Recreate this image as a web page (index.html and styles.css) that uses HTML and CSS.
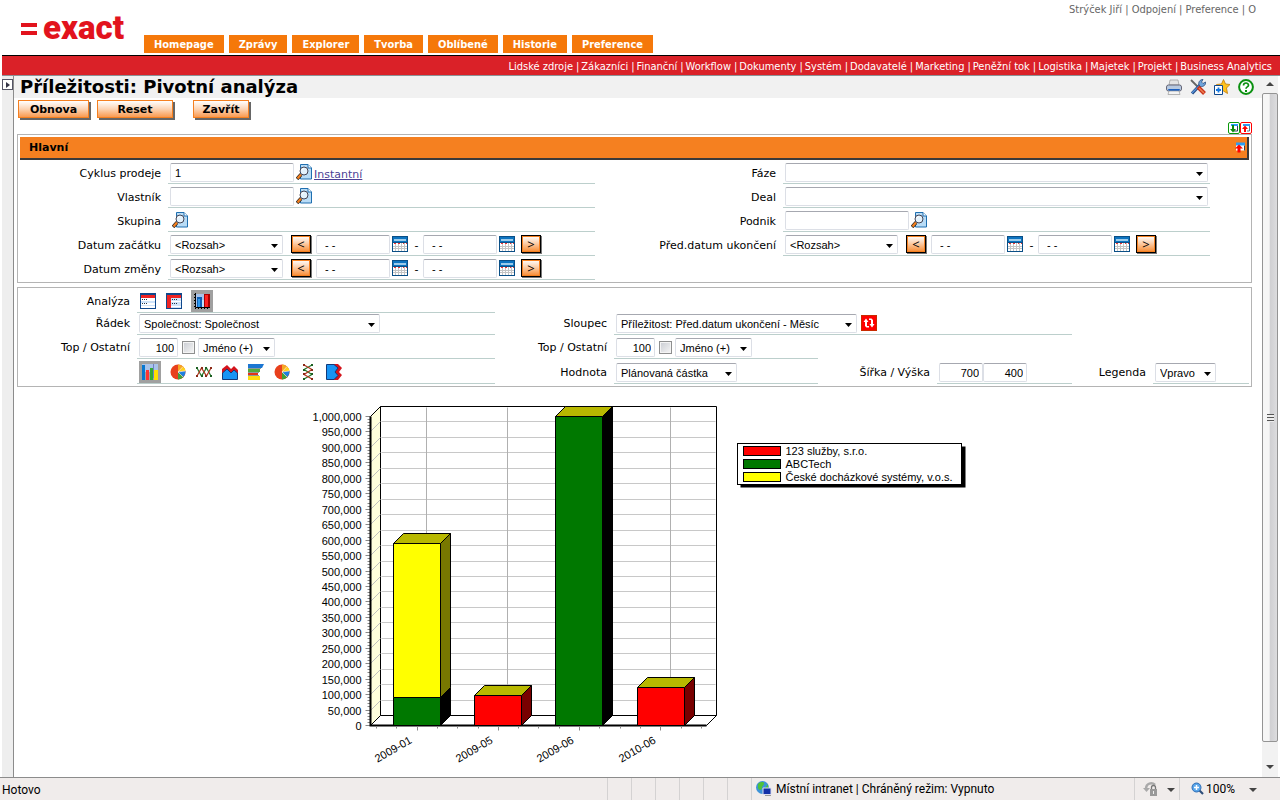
FILE: index.html
```
<!DOCTYPE html>
<html lang="cs">
<head>
  <meta charset="UTF-8">
  <meta name="viewport" content="width=device-width, initial-scale=1.0">
  <title>Příležitosti: Pivotní analýza</title>
  <link rel="stylesheet" href="styles.css">
</head>
<body>

<svg class="sprite" aria-hidden="true">
  <symbol id="i-lookup" viewBox="0 0 16 16">
    <path d="M4.500 .5h7.500l3.500 3.500v11h-11z" fill="#b9dcf6" stroke="#1f6fb0"/>
    <path d="M12 .5V4h3.500" fill="#fff" stroke="#1f6fb0"/>
    <path d="M5 10.500 1 15" stroke="#222" stroke-width="3.500"/>
    <path d="M5 10.500 1.500 14.500" stroke="#f58020" stroke-width="2.200"/>
    <circle cx="8" cy="7" r="4" fill="#e4f2fc" stroke="#445"/>
    <path d="M5.800 6.500a2.300 2.300 0 0 1 2.200-2" fill="none" stroke="#fff"/>
  </symbol>
  <symbol id="i-calendar" viewBox="0 0 16 16">
    <path fill="#0a4f86" d="M0 0h16v16H0z"/>
    <path fill="#0d74c0" d="M1 1h14v5H1z"/>
    <path fill="#9ccbea" d="M2 3h12v2H2z"/>
    <path fill="#fff" d="M1 7h14v8H1z"/>
    <path d="M3.500 7v8M6.500 7v8M9.500 7v8M12.500 7v8M1 10.500h14M1 12.500h14" stroke="#c4c4c4"/>
    <path d="M2 7.500h2m2 0h2m3 0h1m2 0h1" stroke="#e33"/>
  </symbol>
  <symbol id="i-list" viewBox="0 0 16 16">
    <path fill="#10488c" d="M0 0h16v16H0z"/>
    <path fill="#fff" d="M1 5h14v10H1z"/>
    <path fill="#e22" d="M1 2h14v3H1z"/>
    <path fill="#cfe4fa" d="M1 8h14v2H1zm0 4h14v1H1z"/>
    <path d="M2 6.500h1m1 0h1m1 0h1M2 10.500h1m1 0h1m1 0h1" stroke="#234"/>
  </symbol>
  <symbol id="i-pivot" viewBox="0 0 16 16">
    <path fill="#10488c" d="M0 0h16v16H0z"/>
    <path fill="#cfe4fa" d="M5 5h10v10H5z"/>
    <path fill="#e22" d="M1 2h14v3H5v10H1z"/>
    <path d="M6 6.500h1m1 0h1m1 0h1M6 10.500h1m1 0h1m1 0h1" stroke="#234"/>
    <path d="M5 8.500h10M5 13.500h10" stroke="#fff"/>
  </symbol>
  <symbol id="i-chart" viewBox="0 0 16 16">
    <path fill="#a9c3ea" d="M2 1h14v13H2z"/>
    <path d="M1.500 0v14.500H16" fill="none" stroke="#000"/>
    <path d="M.5 1v14M1 15.500h15" fill="none" stroke="#000" stroke-dasharray="1 2"/>
    <path fill="#0f5fb5" d="M3 4h5v10H3z"/><path fill="#2a98f0" d="M4 6h2v8H4z"/>
    <path fill="#bfe0fa" d="M8 7h2v7H8z"/>
    <path fill="#a00" d="M10 1h6v13h-6z"/><path fill="#f22" d="M11 2h3v12h-3z"/>
  </symbol>
  <symbol id="i-bars" viewBox="0 0 16 16">
    <path fill="#a9c3ea" d="M0 0h16v8H0z"/>
    <path fill="#0877d0" d="M0 1h3v15H0z"/>
    <path fill="#f33" d="M4 6h3v10H4z"/>
    <path fill="#3a3" d="M8 4h3v12H8z"/>
    <path fill="#ffe000" d="M12 6h4v10h-4z"/>
    <path fill="#7080c8" d="M11 0h1v14h-1z"/>
  </symbol>
  <symbol id="i-pie" viewBox="0 0 16 16">
    <circle cx="8" cy="8" r="7.500" fill="#e8401c"/>
    <path d="M8 8V.5a7.500 7.500 0 0 1 5 2z" fill="#f5a623"/>
    <path d="M8 8l5-5.500A7.500 7.500 0 0 1 15.500 7z" fill="#ffd21c"/>
    <path d="M8 8l7.500-1a7.500 7.500 0 0 1-2 6z" fill="#1d7fe0"/>
    <path d="M8 8l5.500 5A7.500 7.500 0 0 1 8 15.500z" fill="#3da03a"/>
    <path d="M8 8l5-5.500M8 8l7-1M8 8l5 5" stroke="#fff" stroke-width=".6"/>
  </symbol>
  <symbol id="i-lines" viewBox="0 0 16 16">
    <path d="M1 4l4.500 8 5-8 4.500 8" fill="none" stroke="#237a2b" stroke-width="1.200"/>
    <path d="M1 12l4.500-8 5 8L15 4" fill="none" stroke="#b5341f" stroke-width="1.200"/>
    <path d="M0 3h2v2H0zm5 8h2v2H5zm4-8h2v2H9zm5 8h2v2h-2z" fill="#1c5f22"/>
    <path d="M0 11h2v2H0zm5-8h2v2H5zm4 8h2v2H9zm5-8h2v2h-2z" fill="#8b2a17"/>
  </symbol>
  <symbol id="i-area" viewBox="0 0 16 16">
    <path d="M0 9V5l5-4 4 4 3-3 4 4v4z" fill="#d4141c"/>
    <path d="M.5 15.500V9L5 5l4 4 3-3 3.500 3v6.500z" fill="#1794f5" stroke="#123a7a"/>
  </symbol>
  <symbol id="i-hbars" viewBox="0 0 16 16">
    <path fill="#1b76d2" d="M0 0h16l-2 4H0z"/>
    <path fill="#54a83c" d="M0 5h12v3H0z"/>
    <path fill="#e33318" d="M0 9h10v2H0z"/>
    <path fill="#ffdc10" d="M0 12h12v4H0z"/>
    <path d="M0 4.500h13M0 8.500h11M0 11.500h11" stroke="#8a9a9a"/>
  </symbol>
  <symbol id="i-column-area" viewBox="0 0 16 16">
    <path d="M8 0h4l4 4-3 4 3 3-4 5H8z" fill="#d4141c"/>
    <path d="M.5.500H8l4 3.500-3 4 3 3.500-4 4H.5z" fill="#1794f5" stroke="#123a7a"/>
  </symbol>
  <symbol id="i-swap" viewBox="0 0 16 16">
    <path fill="#c92a00" d="M0 0h16v16H0z"/><path fill="#f00" d="M1 1h14v14H1z"/>
    <path d="M2.500 7 5 3.500 7.500 7H6v4h2v1.500H5.500L4 11V7zM13.500 9 11 12.500 8.500 9H10V5H8V3.500h2.500L12 5v4z" fill="#fff"/>
  </symbol>
  <symbol id="i-fold" viewBox="0 0 10 10">
    <path fill="#fff" d="M1 1h9v7H1z"/><path d="M1 0h9v3H1z" fill="#2b9df5"/><path d="M9.500 3v5" stroke="#345"/>
    <path d="M4 2l4 4H5.500v4h-3V6H0z" fill="#f00"/>
  </symbol>
  <symbol id="i-fold-all" viewBox="0 0 12 12">
    <rect x=".5" y=".5" width="11" height="11" rx="1.500" fill="#fff" stroke="#f00"/>
    <path d="M3 2h7v2H3z" fill="#2b9df5"/><path d="M9.500 4v5H7" stroke="#578" fill="none"/>
    <path d="M5 3.500 8 7H6v3H4V7H2z" fill="#f00"/>
  </symbol>
  <symbol id="i-unfold-all" viewBox="0 0 12 12">
    <rect x=".5" y=".5" width="11" height="11" rx="1.500" fill="#fff" stroke="#0a9a0a"/>
    <path d="M3 2h7v2H3z" fill="#2b9df5"/><path d="M9.500 4v5H6" stroke="#345" fill="none"/>
    <path d="M4 3h2v4h2l-3 3.500L2 7h2z" fill="#0a8a0a"/>
  </symbol>
  <symbol id="i-print" viewBox="0 0 16 16">
    <path d="M4 1h8l1 5H3z" fill="#e4e4e4" stroke="#999" stroke-width=".7"/>
    <rect x=".5" y="6" width="15" height="6" rx="2" fill="#b7c9e0" stroke="#667"/>
    <path d="M2 10h12l-1 2H3z" fill="#1a5fc0"/>
    <path d="M3 12h10l1 3.500H2z" fill="#f4f4f4" stroke="#999" stroke-width=".7"/>
  </symbol>
  <symbol id="i-tools" viewBox="0 0 16 16">
    <path d="M1 1l7 7" stroke="#666" stroke-width="1.800"/>
    <path d="M2 14.500 10 6" stroke="#234a85" stroke-width="3.200"/><path d="M2 14l8-8" stroke="#5a95dd" stroke-width="1.200"/>
    <path d="M9 6c-1-3 1-5.500 4-5.500L11.500 3 13 4.500 15.500 3c.5 3-2 5-5 4.500z" fill="#6ea4dc" stroke="#2b4d7c" stroke-width=".8"/>
    <path d="M8 8l6.500 6.500" stroke="#c8321c" stroke-width="4"/><path d="M9 9l5 5" stroke="#f08050" stroke-width="1.500"/>
  </symbol>
  <symbol id="i-star" viewBox="0 0 16 16">
    <path d="M9.500 .5l2 4.500 4.500.5-3.500 3.500 1 5.500-4-2.500-4 2.500V9L2.500 5.500l5-.5z" fill="#ffc21c" stroke="#c07808" stroke-width=".8"/>
    <path d="M.5 6.500h8v9h-8z" fill="#fff" stroke="#10488c"/>
    <path d="M4.500 8.500v5M2 11h5" stroke="#1478e0" stroke-width="1.800"/>
  </symbol>
  <symbol id="i-help" viewBox="0 0 16 16">
    <circle cx="8" cy="8" r="6.900" fill="#fff" stroke="#0a9010" stroke-width="2"/>
    <path d="M5.500 6.500C5.500 3.200 10.500 3.300 10.500 6.200 10.500 8 8 7.800 8 9.800" fill="none" stroke="#0a9010" stroke-width="1.700"/>
    <path d="M7 11h2v2H7z" fill="#0a9010"/>
  </symbol>
  <symbol id="i-globe" viewBox="0 0 16 16">
    <circle cx="6.500" cy="6.500" r="6.500" fill="#3d93d8"/>
    <path d="M2 3c3-3 7-2 6 0S6 5 6 7s-3 3-4 0zM9 7l3-4v4z" fill="#4fc23a"/>
    <path d="M7 7h8v6.500H7z" fill="#1230a8" stroke="#dde"/><path d="M9 14h6v1H9z" fill="#999"/>
  </symbol>
  <symbol id="i-lock" viewBox="0 0 16 16">
    <path d="M3 8c0-6 6-7 9-4" fill="none" stroke="#aaa" stroke-width="2.500"/>
    <path d="M0 7h7l-3.500 4z" fill="#aaa"/>
    <path d="M8.500 8V6.500a2 2 0 0 1 4 0V8" fill="none" stroke="#777" stroke-width="1.300"/>
    <path d="M7 8h7v7H7z" fill="#999"/><path d="M10 10h1v3h-1z" fill="#eee"/>
  </symbol>
  <symbol id="i-zoom" viewBox="0 0 16 16">
    <path d="M9 9l4 4" stroke="#2d4d78" stroke-width="2.200"/>
    <circle cx="6.500" cy="6.500" r="4.500" fill="#5aa6ea" stroke="#2f6db5"/>
    <path d="M6.500 4v5M4 6.500h5" stroke="#fff" stroke-width="1.500"/>
  </symbol>
</svg>

<header class="top">
  <a class="logo" href="#"><span class="logo-mark"></span>exact</a>
  <nav class="tabs">
    <a href="#">Homepage</a>
    <a href="#">Zprávy</a>
    <a href="#">Explorer</a>
    <a href="#">Tvorba</a>
    <a href="#">Oblíbené</a>
    <a href="#">Historie</a>
    <a href="#">Preference</a>
  </nav>
  <div class="user-links">
    <a href="#">Strýček Jiří</a> | <a href="#">Odpojení</a> | <a href="#">Preference</a> | <a href="#">O</a>
  </div>
</header>

<nav class="modules">
  <a href="#">Lidské zdroje</a>|<a href="#">Zákazníci</a>|<a href="#">Finanční</a>|<a href="#">Workflow</a>|<a href="#">Dokumenty</a>|<a href="#">Systém</a>|<a href="#">Dodavatelé</a>|<a href="#">Marketing</a>|<a href="#">Peněžní tok</a>|<a href="#">Logistika</a>|<a href="#">Majetek</a>|<a href="#">Projekt</a>|<a href="#">Business Analytics</a>
</nav>

<div class="workspace">
  <aside class="rail">
    <button type="button" class="rail-toggle" aria-label="Zobrazit menu"></button>
  </aside>

  <main class="content">
    <div class="title-bar">
      <h1>Příležitosti: Pivotní analýza</h1>
      <div class="page-tools">
        <a href="#" aria-label="Tisk"><svg class="icon"><use href="#i-print"/></svg></a>
        <a href="#" aria-label="Nastavení"><svg class="icon"><use href="#i-tools"/></svg></a>
        <a href="#" aria-label="Oblíbené"><svg class="icon"><use href="#i-star"/></svg></a>
        <a href="#" aria-label="Nápověda"><svg class="icon"><use href="#i-help"/></svg></a>
      </div>
    </div>

    <form id="pivotForm">
      <div class="actions">
        <button type="submit" class="btn btn-refresh">Obnova</button>
        <button type="reset" class="btn btn-reset">Reset</button>
        <button type="button" class="btn btn-close">Zavřít</button>
        <div class="fold-all">
          <a href="#" aria-label="Rozbalit vše"><svg><use href="#i-unfold-all"/></svg></a>
          <a href="#" aria-label="Sbalit vše"><svg><use href="#i-fold-all"/></svg></a>
        </div>
      </div>

      <section class="panel">
        <div class="panel-head">
          <h2>Hlavní</h2>
          <a href="#" aria-label="Sbalit"><svg><use href="#i-fold"/></svg></a>
        </div>
        <div class="filters">
          <label for="cycle">Cyklus prodeje</label>
          <div class="field">
            <input type="text" id="cycle" class="code" value="1">
            <a href="#" aria-label="Hledat"><svg class="icon"><use href="#i-lookup"/></svg></a>
            <a href="#" class="link">Instantní</a>
          </div>
          <label for="phase">Fáze</label>
          <div class="field"><select id="phase" class="wide"><option></option></select></div>

          <label for="owner">Vlastník</label>
          <div class="field">
            <input type="text" id="owner" class="code">
            <a href="#" aria-label="Hledat"><svg class="icon"><use href="#i-lookup"/></svg></a>
          </div>
          <label for="deal">Deal</label>
          <div class="field"><select id="deal" class="wide"><option></option></select></div>

          <label for="group">Skupina</label>
          <div class="field">
            <button type="button" id="group" class="icon-btn" aria-label="Skupina"><svg class="icon"><use href="#i-lookup"/></svg></button>
          </div>
          <label for="company">Podnik</label>
          <div class="field">
            <input type="text" id="company" class="code">
            <a href="#" aria-label="Hledat"><svg class="icon"><use href="#i-lookup"/></svg></a>
          </div>

          <label for="start">Datum začátku</label>
          <div class="field">
            <select id="start" class="range"><option>&lt;Rozsah&gt;</option></select>
            <button type="button" class="step">&lt;</button>
            <input type="text" class="date" value="- -" aria-label="Od">
            <a href="#" aria-label="Kalendář"><svg class="icon"><use href="#i-calendar"/></svg></a>
            <span class="dash">-</span>
            <input type="text" class="date" value="- -" aria-label="Do">
            <a href="#" aria-label="Kalendář"><svg class="icon"><use href="#i-calendar"/></svg></a>
            <button type="button" class="step step-next">&gt;</button>
          </div>
          <label for="expected">Před.datum ukončení</label>
          <div class="field">
            <select id="expected" class="range"><option>&lt;Rozsah&gt;</option></select>
            <button type="button" class="step">&lt;</button>
            <input type="text" class="date" value="- -" aria-label="Od">
            <a href="#" aria-label="Kalendář"><svg class="icon"><use href="#i-calendar"/></svg></a>
            <span class="dash">-</span>
            <input type="text" class="date" value="- -" aria-label="Do">
            <a href="#" aria-label="Kalendář"><svg class="icon"><use href="#i-calendar"/></svg></a>
            <button type="button" class="step step-next">&gt;</button>
          </div>

          <label for="changed">Datum změny</label>
          <div class="field">
            <select id="changed" class="range"><option>&lt;Rozsah&gt;</option></select>
            <button type="button" class="step">&lt;</button>
            <input type="text" class="date" value="- -" aria-label="Od">
            <a href="#" aria-label="Kalendář"><svg class="icon"><use href="#i-calendar"/></svg></a>
            <span class="dash">-</span>
            <input type="text" class="date" value="- -" aria-label="Do">
            <a href="#" aria-label="Kalendář"><svg class="icon"><use href="#i-calendar"/></svg></a>
            <button type="button" class="step step-next">&gt;</button>
          </div>
        </div>
      </section>

      <section class="panel analysis">
        <span class="label">Analýza</span>
        <div class="field icons">
          <a href="#" aria-label="Seznam"><svg class="icon"><use href="#i-list"/></svg></a>
          <a href="#" aria-label="Tabulka"><svg class="icon"><use href="#i-pivot"/></svg></a>
          <a href="#" class="on" aria-label="Graf"><svg class="icon"><use href="#i-chart"/></svg></a>
        </div>

        <label for="row" class="first">Řádek</label>
        <div class="field"><select id="row" class="dimension"><option>Společnost: Společnost</option></select></div>
        <label for="column">Sloupec</label>
        <div class="field span">
          <select id="column" class="dimension"><option>Příležitost: Před.datum ukončení - Měsíc</option></select>
          <a href="#" class="swap" aria-label="Prohodit"><svg class="icon"><use href="#i-swap"/></svg></a>
        </div>

        <label for="rowTop" class="first">Top / Ostatní</label>
        <div class="field">
          <input type="text" id="rowTop" class="top-n" value="100">
          <input type="checkbox" aria-label="Ostatní">
          <select class="sort" aria-label="Řazení"><option>Jméno (+)</option></select>
        </div>
        <label for="colTop">Top / Ostatní</label>
        <div class="field">
          <input type="text" id="colTop" class="top-n" value="100">
          <input type="checkbox" aria-label="Ostatní">
          <select class="sort" aria-label="Řazení"><option>Jméno (+)</option></select>
        </div>

        <div class="field icons types">
          <a href="#" class="on" aria-label="Sloupcový"><svg class="icon"><use href="#i-bars"/></svg></a>
          <a href="#" aria-label="Koláčový"><svg class="icon"><use href="#i-pie"/></svg></a>
          <a href="#" aria-label="Spojnicový"><svg class="icon"><use href="#i-lines"/></svg></a>
          <a href="#" aria-label="Plošný"><svg class="icon"><use href="#i-area"/></svg></a>
          <a href="#" aria-label="Pruhový"><svg class="icon"><use href="#i-hbars"/></svg></a>
          <a href="#" aria-label="Koláčový 2"><svg class="icon"><use href="#i-pie"/></svg></a>
          <a href="#" aria-label="Svislý spojnicový"><svg class="icon turned"><use href="#i-lines"/></svg></a>
          <a href="#" aria-label="Svislý plošný"><svg class="icon"><use href="#i-column-area"/></svg></a>
        </div>
        <label for="value">Hodnota</label>
        <div class="field"><select id="value" class="measure"><option>Plánovaná částka</option></select></div>
        <label for="width">Šířka / Výška</label>
        <div class="field">
          <input type="text" id="width" class="size" value="700">
          <input type="text" class="size" value="400" aria-label="Výška">
        </div>
        <label for="legend">Legenda</label>
        <div class="field"><select id="legend" class="position"><option>Vpravo</option></select></div>
      </section>
    </form>

    <svg id="chart" class="chart" viewBox="0 0 700 384"></svg>
  </main>

  <div class="scrollbar">
    <span class="arrow up"></span>
    <span class="thumb"><i></i></span>
    <span class="arrow down"></span>
  </div>
</div>

<footer class="status">
  <span class="state">Hotovo</span>
  <span class="cell"></span><span class="cell"></span><span class="cell"></span><span class="cell"></span><span class="cell"></span><span class="cell"></span>
  <span class="zone"><svg class="icon"><use href="#i-globe"/></svg>Místní intranet | Chráněný režim: Vypnuto</span>
  <span class="lock"><svg class="icon"><use href="#i-lock"/></svg><span class="arrow down"></span></span>
  <span class="zoom"><svg class="icon"><use href="#i-zoom"/></svg>100%<span class="arrow down"></span></span>
</footer>

<script src="chart.js"></script>
</body>
</html>
```
FILE: styles.css
```
* {
  box-sizing: border-box;
}

body {
  margin: 0;
  height: 100vh;
  display: flex;
  flex-direction: column;
  overflow: hidden;
  background: #fff;
  color: #000;
  font-family: "DejaVu Sans", Verdana, sans-serif;
  font-size: 11px;
}

a {
  color: inherit;
  text-decoration: none;
}

svg {
  display: block;
}

.sprite {
  position: absolute;
  width: 0;
  height: 0;
}

.icon {
  width: 16px;
  height: 16px;
}

.icon.turned {
  transform: rotate(90deg);
}

/* header */

.top {
  height: 55px;
  flex: none;
  display: flex;
  align-items: flex-end;
  font-family: "DejaVu Sans Condensed", Tahoma, sans-serif;
}

.logo {
  display: flex;
  align-items: center;
  gap: 6px;
  width: 144px;
  height: 55px;
  padding-left: 21px;
  font: 900 33px/55px Roboto, sans-serif;
  color: #e2131d;
}

.logo-mark {
  width: 16px;
  height: 12px;
  margin-top: 3px;
  border: solid #e2131d;
  border-width: 4px 0;
}

.tabs {
  display: flex;
  gap: 5px;
  padding-bottom: 2px;
}

.tabs a {
  height: 18px;
  padding: 0 10px;
  background: #f5780a;
  color: #fff;
  font-weight: bold;
  line-height: 20px;
}

.user-links {
  margin-left: auto;
  padding-right: 24px;
  align-self: flex-start;
  line-height: 20px;
  color: #666;
}

.modules {
  flex: none;
  display: flex;
  justify-content: flex-end;
  height: 21px;
  margin-left: 2px;
  padding-right: 5px;
  border-top: 1px solid #000;
  border-bottom: 1px solid #8c9296;
  background: #da2128;
  color: #fff;
  font-family: "DejaVu Sans Condensed", Tahoma, sans-serif;
  line-height: 21px;
  white-space: nowrap;
}

.modules a {
  padding: 0 3px 0 2px;
}

/* workspace */

.workspace {
  flex: 1;
  min-height: 0;
  display: flex;
  padding: 0 2px;
}

.rail {
  width: 12px;
  background: #eee;
  border-right: 1px solid #8c8c8c;
}

.rail-toggle {
  display: block;
  width: 11px;
  height: 11px;
  margin-top: 3px;
  padding: 0 0 0 3px;
  border: 1px solid #556;
  background: #fff;
}

.rail-toggle::before {
  content: "";
  display: block;
  border: 3px solid transparent;
  border-left: 4px solid #334;
  border-right: 0;
}

.content {
  flex: 1;
  min-width: 0;
  overflow: hidden;
}

.title-bar {
  display: flex;
  justify-content: space-between;
  align-items: center;
  height: 22px;
  padding: 0 8px 0 6px;
  background: #f1f1f1;
}

h1 {
  margin: 0;
  font-size: 18px;
  line-height: 22px;
}

.page-tools {
  display: flex;
  gap: 8px;
}

.actions {
  display: flex;
  align-items: flex-start;
  height: 36px;
  padding: 2px 10px 0 4px;
}

.btn {
  height: 18px;
  padding: 0;
  border: 1px solid #f58020;
  background: linear-gradient(#fff, #fcd4b4 50%, #fa9a50);
  box-shadow: 2px 2px 0 #666;
  color: #000;
  font: bold 11px "DejaVu Sans", Verdana, sans-serif;
}

.btn-refresh {
  width: 71px;
}

.btn-reset {
  width: 76px;
  margin-left: 8px;
}

.btn-close {
  width: 56px;
  margin-left: 20px;
}

.fold-all {
  display: flex;
  margin-left: auto;
  align-self: flex-end;
}

.fold-all svg {
  width: 12px;
  height: 12px;
}

/* panels */

.panel {
  margin: 0 10px 4px 3px;
  border: 1px solid #b4b4b4;
}

.panel-head {
  display: flex;
  justify-content: space-between;
  align-items: center;
  height: 23px;
  margin: 2px;
  margin-bottom: 0;
  padding: 0 2px 0 9px;
  border: solid #3a3a3a;
  border-width: 0 2px 2px 0;
  background: #f58020;
}

.panel-head svg {
  width: 10px;
  height: 11px;
}

h2 {
  margin: 0;
  font-size: 11px;
  line-height: 21px;
}

.filters {
  display: grid;
  grid-template-columns: 150px 1fr 188px 1fr 41px;
  grid-auto-rows: 24px;
  padding-bottom: 2px;
}

.filters label:nth-of-type(odd) {
  grid-column: 1;
}

label,
.label {
  align-self: end;
  padding-right: 7px;
  line-height: 20px;
  text-align: right;
  white-space: nowrap;
}

.field {
  display: flex;
  align-items: flex-end;
  min-width: 0;
  padding: 0 0 1px 2px;
  border-bottom: 1px solid #bccfcc;
}

.field > a .icon,
.icon-btn {
  margin: 0 2px 2px;
}

.icon-btn {
  padding: 0;
  border: 0;
  background: none;
}

.field .link {
  line-height: 15px;
  color: #4a3f96;
  text-decoration: underline;
}

input[type="text"],
select {
  height: 19px;
  margin: 0;
  padding: 0 4px;
  border: 1px solid #dcdfe6;
  border-top-color: #a6a8b0;
  border-radius: 2px;
  background: #fff;
  color: #000;
  font: 11px "Liberation Sans", Arial, sans-serif;
}

select {
  appearance: none;
  background: #fff url("data:image/svg+xml,%3Csvg xmlns='http://www.w3.org/2000/svg' width='7' height='4'%3E%3Cpath d='M0 0h7L3.500 4z'/%3E%3C/svg%3E") no-repeat right 4px top 8px;
}

.code {
  width: 124px;
}

.wide {
  width: calc(100% - 2px);
}

.range {
  width: 113px;
  margin-right: 8px;
}

input.date {
  width: 74px;
  padding-left: 8px;
}

.step {
  width: 20px;
  height: 18px;
  margin: 0 5px 1px 0;
  padding: 0;
  border: 1px solid #000;
  background: linear-gradient(#fff, #fcd4b4 40%, #f88a30);
  box-shadow: inset 0 0 0 1px #f58020, 1px 1px 0 #777;
  color: #000;
  font: 13px/14px "Open Sans", sans-serif;
}

.step-next {
  margin-left: 4px;
}

.dash {
  width: 13px;
  line-height: 17px;
  text-align: center;
}

/* analysis panel */

.analysis {
  display: grid;
  grid-template-columns: 119px 358fr 119px 204fr 119px 135fr 81px 96fr 2px;
  grid-template-rows: 25px 22px 24px 25px;
  padding-bottom: 2px;
}

.analysis .first {
  grid-column: 1;
}

.analysis label,
.analysis .label {
  line-height: 22px;
}

.analysis .span {
  grid-column: span 3;
}

.analysis .types {
  grid-column: 2;
}

.analysis .swap {
  margin-left: 2px;
}

.icons {
  gap: 8px;
  padding-bottom: 0;
}

.icons > a .icon {
  margin: 0 1px 3px;
}

.icons .on {
  padding: 3px;
  background: #a0a0a0;
}

.icons > .on .icon {
  margin: 0;
}

.dimension {
  width: 241px;
}

.field .top-n,
.field .size {
  width: 39px;
  padding: 0 3px;
  text-align: right;
}

.field .size {
  width: 44px;
}

input[type="checkbox"] {
  appearance: none;
  width: 13px;
  height: 13px;
  margin: 0 3px 3px 4px;
  border: 1px solid #8e8f8f;
  background: linear-gradient(135deg, #c9ccd2, #f6f6f6);
  box-shadow: inset 0 0 0 1px #f4f4f4;
}

.sort {
  width: 77px;
}

.measure {
  width: 121px;
}

.position {
  width: 61px;
}

/* chart */

.chart {
  width: 700px;
  margin: 0 auto;
  font-family: "Liberation Sans", Arial, sans-serif;
  font-size: 11px;
}

/* scrollbar */

.scrollbar {
  display: flex;
  flex-direction: column;
  justify-content: space-between;
  width: 16px;
  padding-bottom: 4px;
  background: #f2f2f2;
}

.arrow {
  align-self: center;
  border: 4px solid transparent;
}

.arrow.up {
  margin: 2px 0 7px;
  border-bottom-color: #444;
}

.arrow.down {
  margin: 5px 0 0;
  border-top-color: #444;
}

.thumb {
  flex: 1;
  display: flex;
  align-items: center;
  justify-content: center;
  margin-bottom: 18px;
  border: 1px solid #949494;
  border-radius: 2px;
  background: linear-gradient(90deg, #f6f6f6 45%, #cfcfd2 50%, #dcdcde);
}

.thumb i {
  width: 7px;
  height: 8px;
  background: repeating-linear-gradient(#555 0 1px, #eee 1px 3px);
}

/* status bar */

.status {
  flex: none;
  display: flex;
  height: 23px;
  border-top: 1px solid #8c8c8c;
  background: #f0eceb;
  font: 12px/24px Roboto, "Segoe UI", sans-serif;
  white-space: nowrap;
}

.status > span + span {
  border-left: 1px solid #d4d2d2;
}

.state {
  flex: 1;
  padding-left: 2px;
}

.cell {
  width: 24px;
}

.zone,
.lock,
.zoom {
  display: flex;
  align-items: center;
}

.zone {
  width: 383px;
  padding-left: 4px;
  gap: 4px;
}

.lock {
  width: 45px;
  padding-left: 8px;
  gap: 8px;
}

.zoom {
  width: 101px;
  padding-left: 10px;
}

.zoom .arrow {
  margin-left: 14px;
}
```
FILE: chart.js
```
const LEFT = 82;
const BASE = 334;
const TOP = 25;
const DEPTH = 10;
const WIDTH = 336;
const MAX = 1000000;
const BAR = 47;

const series = {
  'sluzby': { name: '123 služby, s.r.o.', color: '#ff0000', side: '#780000' },
  'abc': { name: 'ABCTech', color: '#007800', side: '#000000' },
  'ceske': { name: 'České docházkové systémy, v.o.s.', color: '#ffff00', side: '#787800' }
};

const data = [
  { label: '2009-01', x: 105, parts: [['abc', 92000], ['ceske', 498000]] },
  { label: '2009-05', x: 186, parts: [['sluzby', 98000]] },
  { label: '2009-06', x: 267, parts: [['abc', 1000000]] },
  { label: '2010-06', x: 349, parts: [['sluzby', 124000]] }
];

const y = value => Math.round(BASE - value * (BASE - TOP) / MAX);

function line(x1, y1, x2, y2, color) {
  return `<path d="M${x1} ${y1}L${x2} ${y2}" stroke="${color}"/>`;
}

function poly(points, fill, stroke = '#000') {
  return `<polygon points="${points}" fill="${fill}" stroke="${stroke}"/>`;
}

let out = '';
const back = LEFT + DEPTH;
const right = LEFT + WIDTH;

// walls
out += poly(`${LEFT},${TOP} ${back},${TOP - DEPTH} ${back},${BASE - DEPTH} ${LEFT},${BASE}`, '#ffffdc');
out += poly(`${back},${TOP - DEPTH} ${right + DEPTH},${TOP - DEPTH} ${right + DEPTH},${BASE - DEPTH} ${back},${BASE - DEPTH}`, '#fff');
out += poly(`${LEFT},${BASE} ${back},${BASE - DEPTH} ${right + DEPTH},${BASE - DEPTH} ${right},${BASE}`, '#fff');

// value axis
for (let v = 0; v <= MAX; v += 10000) {
  const major = v % 50000 === 0;
  out += line(LEFT - (major ? 5 : 3), y(v), LEFT, y(v), '#888');
  if (!major) continue;
  if (v > 0 && v < MAX) {
    out += line(LEFT, y(v), back, y(v) - DEPTH, '#c0c0c0');
    out += line(back + 1, y(v) - DEPTH, right + DEPTH - 1, y(v) - DEPTH, '#c8c8c8');
  }
  out += `<text x="73" y="${y(v) + 4}" text-anchor="end">${v.toLocaleString('en-US')}</text>`;
}
data.forEach(d => {
  const x = d.x + 33;
  out += line(x, TOP - DEPTH + 1, x, BASE - DEPTH - 1, '#b0b0b0');
});
out += `<path d="M${LEFT} ${TOP}V${BASE}H${right}" fill="none" stroke="#000" stroke-width="2"/>`;

// category axis
for (let i = 0; i < 17; i++) {
  const x = Math.round(LEFT + 6 + i * 20.3);
  out += line(x, BASE + 1, x, BASE + (i % 4 === 2 ? 5 : 3), '#888');
}

data.forEach(d => {
  let sum = 0;
  const r = d.x + BAR;
  d.parts.forEach(([key, value]) => {
    const s = series[key];
    const low = y(sum);
    sum += value;
    const high = y(sum);
    out += poly(`${d.x},${high} ${r},${high} ${r},${low} ${d.x},${low}`, s.color);
    out += poly(`${r},${high} ${r + DEPTH},${high - DEPTH} ${r + DEPTH},${low - DEPTH} ${r},${low}`, s.side);
  });
  const t = y(sum);
  out += poly(`${d.x},${t} ${d.x + DEPTH},${t - DEPTH} ${r + DEPTH},${t - DEPTH} ${r},${t}`, '#b8b800');
  out += `<text transform="translate(${d.x + 19} ${BASE + 17}) rotate(-30)" text-anchor="end">${d.label}</text>`;
});

// legend
out += '<rect x="452" y="55" width="225" height="41" fill="#000"/>';
out += '<rect x="449" y="52" width="224" height="41" fill="#fff" stroke="#000"/>';
Object.values(series).forEach((s, i) => {
  out += `<rect x="455" y="${55 + i * 13}" width="37" height="9" fill="${s.color}" stroke="#000"/>`;
  out += `<text x="497" y="${63 + i * 13}">${s.name}</text>`;
});

const chart = document.getElementById('chart');
chart.innerHTML = `<g transform="translate(.5 .5)">${out}</g>`;
```
